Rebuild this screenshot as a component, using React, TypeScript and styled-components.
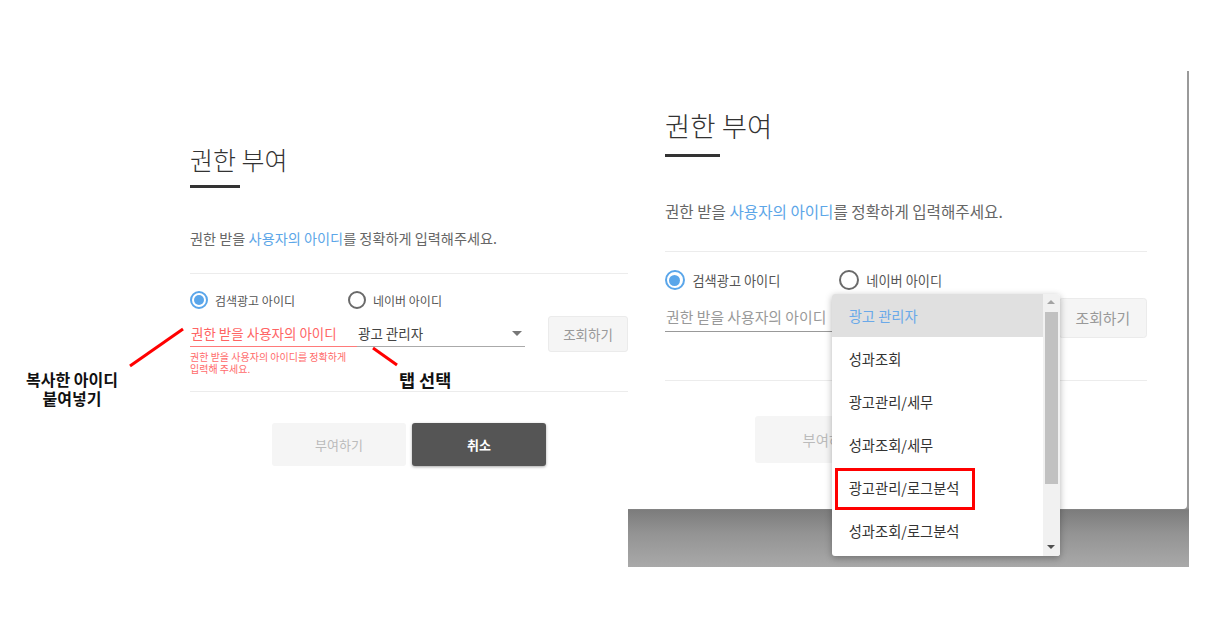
import React from "react";
import styled, { createGlobalStyle } from "styled-components";

// every size inside the dialog is a multiple of --u, so the same dialog can be drawn at 1x and 1.1x
const u = (n: number) => `calc(var(--u) * ${n}px)`;

const ROLES = [
  "광고 관리자",
  "성과조회",
  "광고관리/세무",
  "성과조회/세무",
  "광고관리/로그분석",
  "성과조회/로그분석",
];

const GlobalStyle = createGlobalStyle`
  html, body {
    margin: 0;
    padding: 0;
    background: #fff;
  }
  body {
    font-family: "Noto Sans CJK KR", "Noto Sans", sans-serif;
    color: #333;
  }
  * {
    box-sizing: border-box;
  }
`;

const Page = styled.div`
  position: relative;
  display: flex;
  align-items: flex-start;
  width: 1214px;
  height: 619px;
  overflow: hidden;
`;

const LeftArea = styled.div`
  flex: none;
  width: 628px;
  padding: 145px 0 0 190px;
`;

// backdrop of the captured modal, darker just under the sheet
const ShotFrame = styled.div`
  flex: none;
  margin-top: 71px;
  width: 561px;
  height: 496px;
  background: linear-gradient(
    180deg,
    #9a9a9a 0,
    #9a9a9a 437px,
    #7c7c7c 439px,
    #939393 462px,
    #a9a9a9 100%
  );
`;

const ModalSheet = styled.div`
  position: relative;
  width: 559px;
  height: 438px;
  padding: 39px 0 0 37px;
  background: #fff;
  border-bottom-right-radius: 4px;
`;

const DialogBody = styled.div<{ $scale: number }>`
  --u: ${({ $scale }) => $scale};
  width: ${u(438)};
`;

const Title = styled.h2`
  margin: 0;
  font-size: ${u(25)};
  line-height: ${u(29)};
  font-weight: 300;
  color: #333;
  white-space: nowrap;
`;

const TitleBar = styled.div`
  margin-top: ${u(11)};
  width: ${u(50)};
  height: ${u(3)};
  background: #333;
`;

const Description = styled.p`
  margin: ${u(41)} 0 0;
  font-size: ${u(14.2)};
  line-height: ${u(18)};
  color: #666;
  white-space: nowrap;

  em {
    font-style: normal;
    color: #5ca6e8;
  }
`;

const Divider = styled.div<{ $gap: number }>`
  margin-top: ${({ $gap }) => u($gap)};
  height: 1px;
  background: #ececec;
`;

const RadioRow = styled.div`
  margin-top: ${u(17)};
  display: flex;
  height: ${u(18)};
`;

const RadioItem = styled.label`
  width: ${u(158)};
  display: flex;
  align-items: center;
  gap: ${u(7)};
  font-size: ${u(12)};
  color: #555;
  white-space: nowrap;
`;

const RadioMark = styled.span<{ $checked: boolean }>`
  flex: none;
  width: ${u(18)};
  height: ${u(18)};
  border-radius: 50%;
  border: ${u(2)} solid ${({ $checked }) => ($checked ? "#5aa6ea" : "#6a6a6a")};
  display: flex;
  align-items: center;
  justify-content: center;

  &::after {
    content: "";
    width: ${u(10)};
    height: ${u(10)};
    border-radius: 50%;
    background: ${({ $checked }) => ($checked ? "#5aa6ea" : "transparent")};
  }
`;

const InputRow = styled.div`
  margin-top: ${u(7)};
  display: flex;
  align-items: flex-start;
`;

const IdColumn = styled.div`
  width: ${u(167)};
`;

const Field = styled.div<{ $line: string; $text: string }>`
  position: relative;
  display: flex;
  align-items: center;
  justify-content: space-between;
  height: ${u(31)};
  padding: ${u(4)} ${u(3)} 0 ${u(1)};
  border-bottom: 1px solid ${({ $line }) => $line};
  font-size: ${u(13.5)};
  line-height: ${u(18)};
  color: ${({ $text }) => $text};
  white-space: nowrap;
`;

const SelectField = styled(Field)`
  width: ${u(168)};
`;

const Caret = styled.span`
  margin-left: auto;
  width: 0;
  height: 0;
  border-left: ${u(5)} solid transparent;
  border-right: ${u(5)} solid transparent;
  border-top: ${u(5)} solid #777;
`;

const ErrorText = styled.div<{ $shown: boolean }>`
  margin-top: ${u(4)};
  height: ${u(24)};
  font-size: ${u(10)};
  line-height: ${u(12)};
  color: #ff6b6b;
  word-break: keep-all;
  visibility: ${({ $shown }) => ($shown ? "visible" : "hidden")};
`;

const LookupButton = styled.button`
  margin-left: auto;
  width: ${u(80)};
  height: ${u(36)};
  border: 1px solid #ebebeb;
  border-radius: ${u(3)};
  background: #f5f5f5;
  font-family: inherit;
  font-size: ${u(13.5)};
  color: #999;
`;

const ButtonRow = styled.div`
  margin-top: ${u(31)};
  display: flex;
  justify-content: center;
  gap: ${u(6)};
`;

const ActionButton = styled.button<{ $primary?: boolean }>`
  width: ${u(134)};
  height: ${u(43)};
  border: 0;
  border-radius: ${u(3)};
  font-family: inherit;
  font-size: ${u(13)};
  font-weight: ${({ $primary }) => ($primary ? 700 : 400)};
  color: ${({ $primary }) => ($primary ? "#fff" : "#bbb")};
  background: ${({ $primary }) => ($primary ? "#555" : "#f5f5f5")};
  box-shadow: ${({ $primary }) => ($primary ? "0 1px 3px rgba(0, 0, 0, 0.35)" : "none")};
`;

/* open dropdown of the second screenshot */
const Menu = styled.div`
  position: absolute;
  z-index: 5;
  left: -17px;
  top: -4px;
  width: 228px;
  height: 262px;
  display: flex;
  background: #fff;
  border-radius: 3px;
  box-shadow: 0 2px 7px rgba(0, 0, 0, 0.3);
  overflow: hidden;
`;

const MenuList = styled.ul`
  margin: 0;
  padding: 0;
  list-style: none;
  flex: 1;
`;

const MenuItem = styled.li<{ $active?: boolean }>`
  display: flex;
  align-items: center;
  height: 43px;
  padding-left: 17px;
  font-size: 14.3px;
  color: ${({ $active }) => ($active ? "#6aa9e9" : "#333")};
  background: ${({ $active }) => ($active ? "#e0e0e0" : "transparent")};
`;

const ScrollTrack = styled.div`
  flex: none;
  width: 17px;
  background: #f1f1f1;
  display: flex;
  flex-direction: column;
  align-items: center;
`;

const ScrollArrow = styled.span<{ $down?: boolean; $dim?: boolean }>`
  flex: none;
  height: 17px;
  display: flex;
  align-items: center;
  justify-content: center;

  &::before {
    content: "";
    border-left: 4px solid transparent;
    border-right: 4px solid transparent;
    ${({ $down, $dim }) =>
      $down
        ? `border-top: 4px solid ${$dim ? "#a3a3a3" : "#505050"};`
        : `border-bottom: 4px solid ${$dim ? "#a3a3a3" : "#505050"};`}
  }
`;

const ScrollThumb = styled.div`
  width: 13px;
  height: 172px;
  margin-top: 1px;
  background: #c1c1c1;
`;

const ScrollGap = styled.div`
  flex: 1;
`;

const CalloutBox = styled.div`
  position: absolute;
  left: 3px;
  top: 174px;
  width: 140px;
  height: 42px;
  border: 3px solid #ff0000;
  pointer-events: none;
`;

/* annotations on the page */
const NoteLines = styled.svg`
  position: absolute;
  left: 0;
  top: 0;
  pointer-events: none;
`;

const NoteLabel = styled.div<{ $x: number; $y: number; $size: number }>`
  position: absolute;
  left: ${({ $x }) => $x}px;
  top: ${({ $y }) => $y}px;
  font-size: ${({ $size }) => $size}px;
  line-height: 19px;
  font-weight: 700;
  color: #111;
  text-align: center;
  white-space: nowrap;
`;

type DialogProps = {
  scale: number;
  open?: boolean;
};

const GrantDialog: React.FC<DialogProps> = ({ scale, open = false }) => {
  return (
    <DialogBody $scale={scale}>
      <Title>권한 부여</Title>
      <TitleBar />
      <Description>
        권한 받을 <em>사용자의 아이디</em>를 정확하게 입력해주세요.
      </Description>
      <Divider $gap={26} />
      <RadioRow>
        <RadioItem>
          <RadioMark $checked />
          검색광고 아이디
        </RadioItem>
        <RadioItem>
          <RadioMark $checked={false} />
          네이버 아이디
        </RadioItem>
      </RadioRow>
      <InputRow>
        <IdColumn>
          <Field
            $line={open ? "#999" : "#ff7a7a"}
            $text={open ? "#999" : "#ff6464"}
          >
            권한 받을 사용자의 아이디
          </Field>
          <ErrorText $shown={!open}>
            권한 받을 사용자의 아이디를 정확하게 입력해 주세요.
          </ErrorText>
        </IdColumn>
        <SelectField $line="#aaa" $text="#444">
          {!open && "광고 관리자"}
          <Caret />
          {open && (
            <Menu>
              <MenuList>
                {ROLES.map((role, i) => (
                  <MenuItem key={role} $active={i === 0}>
                    {role}
                  </MenuItem>
                ))}
              </MenuList>
              <ScrollTrack>
                <ScrollArrow $dim />
                <ScrollThumb />
                <ScrollGap />
                <ScrollArrow $down />
              </ScrollTrack>
              <CalloutBox />
            </Menu>
          )}
        </SelectField>
        <LookupButton>조회하기</LookupButton>
      </InputRow>
      <Divider $gap={16} />
      <ButtonRow>
        <ActionButton>부여하기</ActionButton>
        <ActionButton $primary>취소</ActionButton>
      </ButtonRow>
    </DialogBody>
  );
};

export default function App() {
  return (
    <>
      <GlobalStyle />
      <Page>
        <LeftArea>
          <GrantDialog scale={1} />
        </LeftArea>
        <ShotFrame>
          <ModalSheet>
            <GrantDialog scale={1.1} open />
          </ModalSheet>
        </ShotFrame>

        <NoteLines width="1214" height="619" viewBox="0 0 1214 619">
          <line x1="130" y1="366" x2="183" y2="329" stroke="#ff0000" strokeWidth="3" />
          <line x1="373" y1="348" x2="397" y2="365" stroke="#ff0000" strokeWidth="3" />
        </NoteLines>
        <NoteLabel $x={26} $y={370} $size={16}>
          복사한 아이디
          <br />
          붙여넣기
        </NoteLabel>
        <NoteLabel $x={399} $y={370} $size={17.5}>
          탭 선택
        </NoteLabel>
      </Page>
    </>
  );
}
